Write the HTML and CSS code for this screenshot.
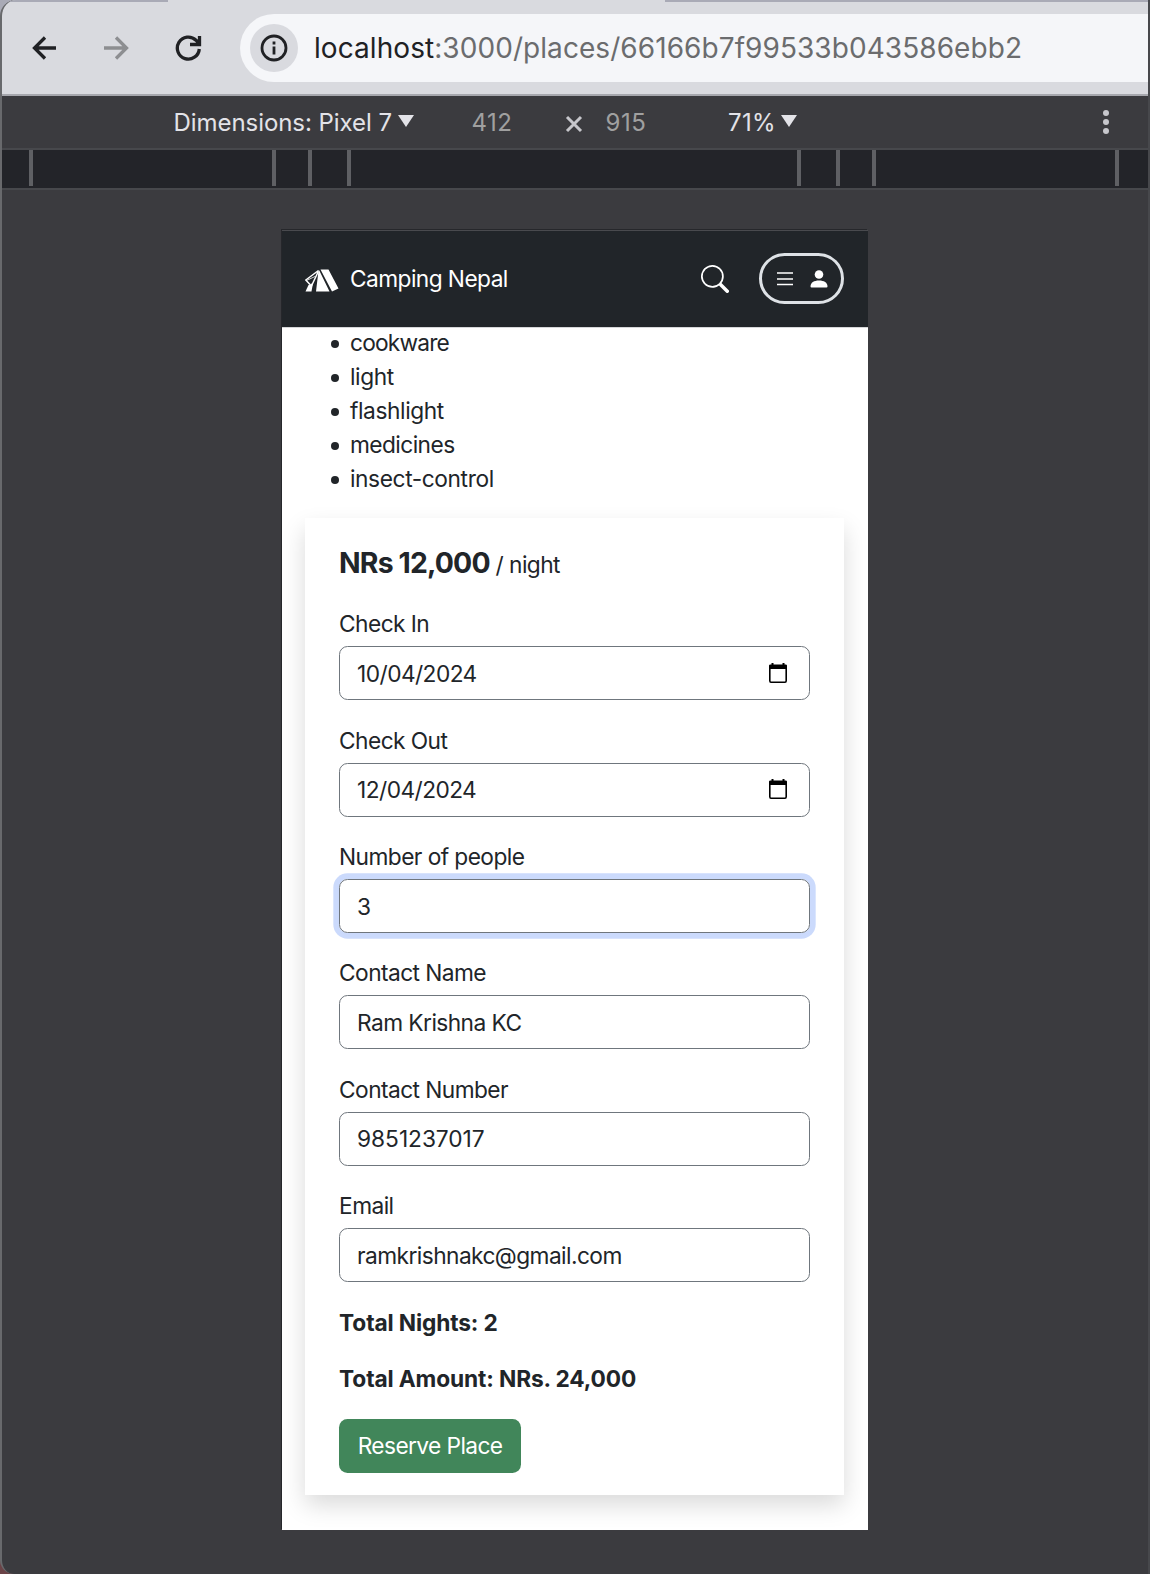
FILE: index.html
```html
<!DOCTYPE html>
<html lang="en">
<head>
<meta charset="utf-8">
<title>Camping Nepal</title>
<link rel="stylesheet" href="styles.css">
</head>
<body>
<div class="window">
  <header class="toolbar">
    <div class="tab"></div>
    <svg class="tool back" viewBox="0 0 28 28"><path d="M25 14H4M14 3.500L3.500 14L14 24.500"/></svg>
    <svg class="tool forward" viewBox="0 0 28 28"><path d="M2 14H23M14 3.500L24.500 14L14 24.500"/></svg>
    <svg class="tool reload" viewBox="0 0 28 28"><path d="M25.300 15A11 11 0 1 1 22 6.200L24.500 9M25.500 2V10.500H16"/></svg>
    <div class="omnibox">
      <span class="info"><svg viewBox="0 0 28 28"><circle cx="14" cy="14" r="12"/><path d="M14 12.500V20.500M14 7.500V10.500"/></svg></span>
      <span class="url"><b>localhost</b>:3000/places/66166b7f99533b043586ebb2</span>
    </div>
  </header>
  <div class="devicebar">
    <span class="dim">Dimensions: Pixel 7</span><i class="caret"></i>
    <span class="num w">412</span>
    <svg class="times" viewBox="0 0 18 18"><path d="M2 2L16 16M16 2L2 16"/></svg>
    <span class="num h">915</span>
    <span class="pct">71%</span><i class="caret"></i>
    <svg class="dots" viewBox="0 0 6 24"><circle cx="3" cy="3" r="3"/><circle cx="3" cy="12" r="3"/><circle cx="3" cy="21" r="3"/></svg>
  </div>
  <div class="ruler"><i></i><i></i><i></i><i></i><i></i><i></i><i></i><i></i></div>
  <main class="stage">
    <div class="phone">
      <nav class="navbar">
        <svg class="logo" viewBox="0 0 34 23"><path class="fill" d="M13.500 1.500L11 22.500H24.500L14.300 1.500ZM15.500 .5H23.500L33.500 19.500L27 22.500Z"/><path class="line" d="M13.500 1.500L.8 11L5 15.500M13.300 2.500L5.500 19"/><path class="line thin" d="M1.500 11.500L10 7.500"/><path class="fill" d="M3.500 16L8 14L6.500 22.500H.5Z"/></svg>
        <span class="brand">Camping Nepal</span>
        <svg class="search" viewBox="0 0 16 16"><path d="M11.742 10.344a6.500 6.500 0 1 0-1.397 1.398h-.001q.044.060.098.115l3.850 3.850a1 1 0 0 0 1.415-1.414l-3.850-3.850a1 1 0 0 0-.115-.1zM12 6.500a5.500 5.500 0 1 1-11 0 5.500 5.500 0 0 1 11 0"/></svg>
        <div class="pill">
          <svg class="burger" viewBox="0 0 16 14"><path d="M0 1H16M0 7H16M0 12.500H16"/></svg>
          <svg class="user" viewBox="0 0 18 18"><circle cx="9" cy="4.500" r="4.300"/><path d="M.5 16.500C.5 12.500 4 10.500 9 10.500S17.500 12.500 17.500 16.500Q17.500 17.500 16.500 17.500H1.500Q.5 17.500 .5 16.500Z"/></svg>
        </div>
      </nav>
      <ul class="items"><li class="tight">cookware</li><li class="narrow">light</li><li class="narrow">flashlight</li><li>medicines</li><li class="narrow">insect-control</li></ul>
      <form class="card">
        <p class="price"><strong>NRs 12,000</strong> <span>/ night</span></p>
        <label class="field"><span>Check In</span><div class="control"><span>10/04/2024</span><svg viewBox="0 0 18 20"><path class="fill" d="M0 2.500Q0 1.500 1.500 1.500H16.500Q18 1.500 18 2.500V6H0ZM2.500 0H4.500V2H2.500ZM13.500 0H15.500V2H13.500Z"/><path d="M.8 5V17.800Q.8 19.200 2 19.200H16Q17.200 19.200 17.200 17.800V5"/></svg></div></label>
        <label class="field"><span>Check Out</span><div class="control"><span>12/04/2024</span><svg viewBox="0 0 18 20"><path class="fill" d="M0 2.500Q0 1.500 1.500 1.500H16.500Q18 1.500 18 2.500V6H0ZM2.500 0H4.500V2H2.500ZM13.500 0H15.500V2H13.500Z"/><path d="M.8 5V17.800Q.8 19.200 2 19.200H16Q17.200 19.200 17.200 17.800V5"/></svg></div></label>
        <label class="field"><span>Number of people</span><div class="control focus"><span>3</span></div></label>
        <label class="field"><span>Contact Name</span><div class="control"><span>Ram Krishna KC</span></div></label>
        <label class="field"><span>Contact Number</span><div class="control digits"><span>9851237017</span></div></label>
        <label class="field"><span>Email</span><div class="control"><span>ramkrishnakc@gmail.com</span></div></label>
        <p class="total">Total Nights: 2</p>
        <p class="total">Total Amount: NRs. 24,000</p>
        <button class="reserve" type="button">Reserve Place</button>
      </form>
    </div>
  </main>
</div>
</body>
</html>
```
FILE: styles.css
```css
* { box-sizing: border-box; }
body { margin: 0; font-family: Inter, "Liberation Sans", sans-serif; background: linear-gradient(#a9aab6 50%, #6b4347 50%); }
svg { display: block; flex: none; }
p, ul { margin: 0; }

.window { height: 1574px; overflow: hidden; display: flex; flex-direction: column; border-left: 2px solid #68696c; border-right: 2px solid #47484c; border-top-left-radius: 16px; border-bottom-left-radius: 14px; background: #3b3b3f; }

.toolbar { position: relative; height: 96px; margin: 0 -2px; display: flex; align-items: center; background: #d9dadf; border-top: 2px solid #a9aab6; border-bottom: 2px solid #a6a7ad; }
.tab { position: absolute; left: 168px; top: -2px; width: 497px; height: 2px; background: #d9dadf; }
.tool { width: 28px; height: 28px; fill: none; stroke: #202124; stroke-width: 3.300; }
.back { margin-left: 31px; }
.forward { margin-left: 43px; stroke: #8d8e91; }
.reload { margin-left: 44px; }
.omnibox { flex: 1; height: 68px; margin-left: 38px; padding-left: 10px; display: flex; align-items: center; background: #f5f6f9; border-radius: 34px 0 0 34px; }
.info { width: 48px; height: 48px; flex: none; display: grid; place-items: center; border-radius: 50%; background: #d9dadf; }
.info svg { width: 28px; height: 28px; fill: none; stroke: #202124; stroke-width: 2.800; }
.url { margin: 0 0 0 16px; font-size: 28px; letter-spacing: .065px; white-space: nowrap; color: #6b6c6e; }
.url b { font-weight: 400; color: #202124; }

.devicebar { height: 54px; flex: none; display: flex; align-items: center; border-bottom: 2px solid #47484c; font-size: 24px; color: #e3e3e8; }
.dim { width: 218px; margin-left: 171.500px; letter-spacing: -.06px; white-space: nowrap; }
.caret { margin: -2px -.5px 0 6.500px; border: 8px solid transparent; border-top: 12px solid #e3e3e8; border-bottom: 0; }
.num { color: #a0a0a0; letter-spacing: .500px; }
.w { width: 40px; margin-left: 58px; }
.times { width: 18px; height: 18px; margin: 4px 0 0 53.500px; stroke: #c7c7cc; stroke-width: 3; }
.h { width: 41px; margin-left: 22.500px; }
.pct { width: 46px; margin-left: 81.500px; letter-spacing: .300px; }
.dots { width: 6px; height: 24px; margin: 0 39px 0 auto; fill: #c7c7cc; }

.ruler { height: 40px; flex: none; display: flex; background: #232429; border-bottom: 2px solid #47484c; }
.ruler i { width: 4px; height: 36px; background: #5f6064; }
.ruler i:nth-child(1) { margin-left: 27px; }
.ruler i:nth-child(2) { margin-left: 239px; }
.ruler i:nth-child(3) { margin-left: 32px; }
.ruler i:nth-child(4) { margin-left: 35px; }
.ruler i:nth-child(5) { margin-left: 446px; }
.ruler i:nth-child(6) { margin-left: 35px; }
.ruler i:nth-child(7) { margin-left: 32px; }
.ruler i:nth-child(8) { margin-left: 239px; }

.stage { flex: 1; padding: 40px 0 44px 280px; }
.phone { width: 586px; height: 1300px; overflow: hidden; background: #fff; box-shadow: -1px -1px 0 #26272b; font-size: 22.720px; line-height: 34.080px; letter-spacing: -.570px; color: #212529; }
.navbar { height: 98px; padding: 0 24px 0 23px; display: flex; align-items: center; background: #212529; border-top: 1px solid #494a4e; border-bottom: 1px solid #d5d6d8; color: #fff; }
.logo { width: 34px; height: 23px; margin-top: 3px; }
.logo .fill { fill: #fff; }
.logo .line { fill: none; stroke: #fff; stroke-width: 1.500; }
.logo .thin { stroke-width: .8; }
.brand { margin: 1px 0 0 11px; }
.search { width: 28px; height: 28px; margin: -1px 0 0 auto; fill: #fff; }
.pill { width: 85px; height: 51px; margin: -1px 0 0 30px; padding-left: 1px; display: flex; align-items: center; justify-content: center; gap: 17px; border: 3px solid #dee2e6; border-radius: 26px; }
.burger { width: 16px; height: 14px; stroke: #fff; stroke-width: 1.400; }
.user { width: 18px; height: 18px; fill: #fff; }

.items { margin-top: -2px; padding-left: 68px; list-style: none; }
.items li { display: flex; align-items: center; }
.items .narrow { letter-spacing: -.400px; }
.items .tight { letter-spacing: -.800px; }
.items li::before { content: ""; width: 8px; height: 8px; margin: 1px 11.500px 0 -19.500px; border-radius: 50%; background: #212529; }

.card { width: 539px; margin: 21.720px 0 0 23px; padding: 23.720px 34.080px 22px; background: #fff; box-shadow: 0 11.360px 22.720px rgba(0, 0, 0, .15); }
.price { height: 42.600px; margin-bottom: 22.720px; line-height: 42.600px; }
.price strong { font-size: 28.400px; font-weight: 700; letter-spacing: -.850px; }
.price span { letter-spacing: -.550px; }
.field { display: block; margin-bottom: 22.720px; }
.field > span { display: block; margin-bottom: 5px; }
.control { height: 53.960px; margin-bottom: 23.400px; padding: 1px 22px 0 17px; display: flex; align-items: center; justify-content: space-between; border: 1.420px solid #6f767d; border-radius: 8.500px; }
.control svg { width: 18px; height: 20px; margin-top: -2px; fill: none; stroke: #000; stroke-width: 1.600; }
.control .fill { fill: #000; stroke: none; }
.digits { letter-spacing: -.050px; }
.focus { box-shadow: 0 0 0 5.680px #cbdafc; }
.total { margin-bottom: 22.720px; font-weight: 700; letter-spacing: -.130px; }
.reserve { display: block; width: 182px; height: 54px; padding: 0; border: 0; border-radius: 8.500px; background: #41865a; color: #fff; font: inherit; letter-spacing: -.600px; }
```
